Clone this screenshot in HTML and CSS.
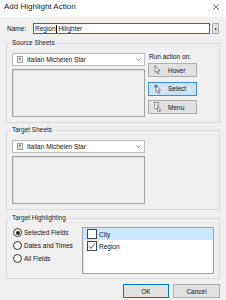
FILE: index.html
```html
<!DOCTYPE html>
<html>
<head>
<meta charset="utf-8">
<link rel="stylesheet" href="styles.css">
</head>
<body>
<div class="titlebar">
  <span class="title">Add Highlight Action</span>
  <svg class="close" viewBox="0 0 6 6" width="6" height="6"><path d="M0.3 0.3L5.7 5.7M5.7 0.3L0.3 5.7" stroke="#555" stroke-width="0.8" fill="none"/></svg>
</div>

<div class="name-row">
  <span class="name-label">Name:</span>
  <div class="name-input"><span>Region</span><span class="caret"></span><span> Hilighter</span></div>
  <div class="mini"><span class="tri"></span></div>
</div>

<fieldset class="group source">
  <legend>Source Sheets</legend>
  <div class="source-body">
    <div class="sheets">
      <div class="dropdown">
        <svg class="sheet-icon" viewBox="0 0 6 7" width="6" height="7"><rect x="0.5" y="0.5" width="5" height="6" fill="#fff" stroke="#8a8a8a" stroke-width="0.8"/><rect x="1.6" y="1.6" width="2.2" height="2" fill="#7a7a7a"/><path d="M1.6 5H4.4" stroke="#9a9a9a" stroke-width="0.7"/></svg>
        <span class="dd-text">Italian Michelen Star</span>
        <svg class="chev" viewBox="0 0 5 3" width="5" height="3"><path d="M0.3 0.4L2.5 2.6L4.7 0.4" stroke="#666" stroke-width="0.7" fill="none"/></svg>
      </div>
      <div class="listbox"></div>
    </div>
    <div class="run">
      <div class="run-label">Run action on:</div>
      <div class="run-btn">
        <svg class="btn-icon" viewBox="0 0 7 10" width="7" height="10"><path d="M1 0.6V7.6L2.7 6.1L3.9 8.9L5 8.4L3.8 5.7H6Z" fill="#fff" stroke="#555" stroke-width="0.7" stroke-linejoin="round"/></svg>
        <span>Hover</span>
      </div>
      <div class="run-btn active">
        <svg class="btn-icon" viewBox="0 0 7 10" width="7" height="10"><circle cx="2" cy="2.2" r="1.8" fill="#4a90d9"/><path d="M2 1.6V8.2L3.5 6.9L4.6 9.4L5.6 8.9L4.5 6.4H6.5Z" fill="#fff" stroke="#555" stroke-width="0.7" stroke-linejoin="round"/></svg>
        <span>Select</span>
      </div>
      <div class="run-btn">
        <svg class="btn-icon" viewBox="0 0 7 10" width="7" height="10"><rect x="0.5" y="0.5" width="4.2" height="6" fill="#fff" stroke="#777" stroke-width="0.7"/><path d="M1.4 2.2H3.8M1.4 3.6H3.8" stroke="#999" stroke-width="0.6"/><path d="M3.4 4.2V9.2L4.6 8.2L5.4 9.8L6.2 9.4L5.4 7.8H6.8Z" fill="#fff" stroke="#555" stroke-width="0.6" stroke-linejoin="round"/></svg>
        <span>Menu</span>
      </div>
    </div>
  </div>
</fieldset>

<fieldset class="group target">
  <legend>Target Sheets</legend>
  <div class="sheets">
    <div class="dropdown">
      <svg class="sheet-icon" viewBox="0 0 6 7" width="6" height="7"><rect x="0.5" y="0.5" width="5" height="6" fill="#fff" stroke="#8a8a8a" stroke-width="0.8"/><rect x="1.6" y="1.6" width="2.2" height="2" fill="#7a7a7a"/><path d="M1.6 5H4.4" stroke="#9a9a9a" stroke-width="0.7"/></svg>
      <span class="dd-text">Italian Michelen Star</span>
      <svg class="chev" viewBox="0 0 5 3" width="5" height="3"><path d="M0.3 0.4L2.5 2.6L4.7 0.4" stroke="#666" stroke-width="0.7" fill="none"/></svg>
    </div>
    <div class="listbox"></div>
  </div>
</fieldset>

<fieldset class="group highlight">
  <legend>Target Highlighting</legend>
  <div class="hl-body">
    <div class="radios">
      <div class="radio-row"><span class="radio checked"><span class="dot"></span></span><span>Selected Fields</span></div>
      <div class="radio-row"><span class="radio"></span><span>Dates and Times</span></div>
      <div class="radio-row"><span class="radio"></span><span>All Fields</span></div>
    </div>
    <div class="fields">
      <div class="field-row selected"><span class="check"></span><span>City</span></div>
      <div class="field-row"><span class="check"><svg viewBox="0 0 8 8" width="8" height="8"><path d="M1 4.2L3 6.4L7 1.4" stroke="#333" stroke-width="0.8" fill="none"/></svg></span><span>Region</span></div>
    </div>
  </div>
</fieldset>

<div class="actions">
  <div class="btn default">OK</div>
  <div class="btn">Cancel</div>
</div>
</body>
</html>
```

FILE: styles.css
```css
* { box-sizing: border-box; }
html, body { margin: 0; padding: 0; }
body {
  width: 226px;
  height: 300px;
  overflow: hidden;
  background: #f0f0f0;
  font-family: "Liberation Sans", Arial, sans-serif;
  font-size: 6.5px;
  color: #111;
}

.titlebar {
  height: 17px;
  background: #fff;
  display: flex;
  justify-content: space-between;
  align-items: flex-start;
  padding: 2px 7px 0 4px;
}
.title { font-size: 8px; line-height: 10px; color: #222; }
.close { margin-top: 2px; display: block; }

.name-row {
  display: flex;
  align-items: center;
  height: 11px;
  margin: 6px 0 0 7px;
}
.name-label { width: 26px; line-height: 11px; }
.name-input {
  width: 177px;
  height: 11px;
  border: 1px solid #0078d7;
  background: #fff;
  padding-left: 1px;
  display: flex;
  align-items: center;
  white-space: pre;
}
.caret { display: block; width: 0; height: 8px; border-left: 1px solid #000; }
.mini {
  width: 7px;
  height: 11px;
  margin-left: 2px;
  background: #e1e1e1;
  border: 1px solid #adadad;
  display: flex;
  align-items: center;
  justify-content: center;
}
.tri {
  display: block;
  width: 0;
  height: 0;
  border-top: 1.5px solid transparent;
  border-bottom: 1.5px solid transparent;
  border-left: 2px solid #111;
}

.group {
  border: 1px solid #dcdcdc;
  margin: 0 0 0 6px;
  width: 214px;
  min-width: 0;
  padding: 6px 5px 5px 5px;
}
.group legend {
  padding: 0 1px;
  margin-left: -1px;
  line-height: 8px;
  height: 8px;
  font-size: 6.5px;
  color: #222;
}
.source { margin-top: 5px; }
.target { margin-top: 3px; }
.highlight { margin-top: 4px; padding: 0 5px 4px 5px; }

.source-body { display: flex; gap: 3px; }
.sheets { width: 133px; display: flex; flex-direction: column; gap: 3px; }
.dropdown {
  height: 13px;
  background: #fff;
  border: 1px solid #bcbcbc;
  display: flex;
  align-items: center;
  padding: 0 3px 0 4px;
}
.sheet-icon { display: block; margin-right: 4px; flex: none; }
.dd-text { flex: 1; white-space: nowrap; }
.chev { display: block; flex: none; }
.listbox {
  height: 48px;
  background: #f0f0f0;
  border: 1px solid #a3a3a3;
  box-shadow: inset 1px 1px 0 #dadada;
}

.run { width: 49px; display: flex; flex-direction: column; gap: 4.5px; }
.run-label { line-height: 8px; margin-left: 1px; margin-bottom: -2.5px; white-space: nowrap; }
.run-btn {
  height: 14px;
  background: #e1e1e1;
  border: 1px solid #adadad;
  display: flex;
  align-items: center;
  padding-left: 5px;
  gap: 7px;
}
.run-btn.active { background: #cce4f7; border-color: #3c8ee0; }
.btn-icon { display: block; flex: none; }

.hl-body { display: flex; }
.radios { width: 70px; padding-top: 4px; }
.radio-row { height: 13px; display: flex; align-items: center; gap: 2px; white-space: nowrap; }
.radio {
  width: 9px;
  height: 9px;
  margin-left: 1px;
  border: 1px solid #333;
  border-radius: 50%;
  background: #fff;
  display: flex;
  align-items: center;
  justify-content: center;
  flex: none;
}
.dot { display: block; width: 4px; height: 4px; border-radius: 50%; background: #222; }

.fields {
  width: 132px;
  height: 47px;
  margin-top: 5px;
  background: #fff;
  border: 1px solid #a3a3a3;
  box-shadow: inset 1px 1px 0 #dadada;
}
.field-row {
  height: 12px;
  display: flex;
  align-items: center;
  padding-left: 4px;
  gap: 2px;
}
.field-row.selected { background: #cce8ff; }
.check {
  width: 10px;
  height: 10px;
  border: 1px solid #444;
  background: #fff;
  display: flex;
  align-items: center;
  justify-content: center;
  flex: none;
}
.check svg { display: block; }

.actions {
  display: flex;
  justify-content: flex-end;
  gap: 4px;
  padding-right: 6px;
  margin-top: 5px;
}
.btn {
  height: 14px;
  background: #e1e1e1;
  border: 1px solid #adadad;
  display: flex;
  align-items: center;
  justify-content: center;
  width: 47px;
}
.btn.default { width: 46px; border-color: #0078d7; }
```
